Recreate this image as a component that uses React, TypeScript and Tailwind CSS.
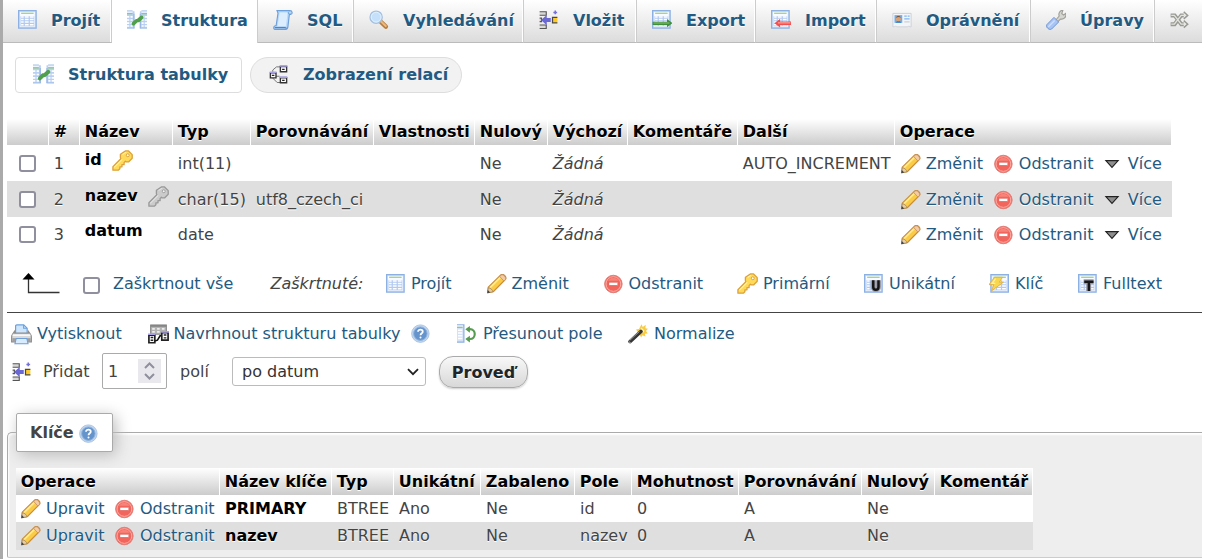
import React from "react";

type IconProps = { className?: string };

function Svg({ className = "size-5", children }: IconProps & { children: React.ReactNode }) {
  return (
    <svg viewBox="0 0 16 16" className={`shrink-0 ${className}`} fill="none">
      {children}
    </svg>
  );
}

function Sheet() {
  return (
    <>
      <rect x="0.5" y="0.5" width="14" height="14" fill="#cfe0f6" stroke="#8db0e2" />
      <rect x="1.6" y="1.6" width="11.8" height="11.8" fill="#f8fbff" />
      <path d="M2.5 2.6h10" stroke="#8fca7c" strokeWidth="0.9" />
      <path d="M2 5h11v8H2z" fill="#b3caf0" />
      <path d="M2.5 5.6h2M5.5 5.6h3M9.5 5.6h3M2.5 7.6h2M5.5 7.6h3M9.5 7.6h3M2.5 9.6h2M5.5 9.6h3M9.5 9.6h3M2.5 11.8h2M5.5 11.8h3M9.5 11.8h3" stroke="#fff" strokeWidth="1.1" />
    </>
  );
}

const Browse = (p: IconProps) => (
  <Svg {...p}><Sheet /></Svg>
);

const Structure = (p: IconProps) => (
  <Svg {...p}>
    <path d="M0 1h6v13.5H0zM10.3 1H16v13.5h-5.7z" fill="#b9d0f3" />
    <path d="M0 .7h4.5M16 .7h-4.5M0 14.5h6M16 14.5h-5.7" stroke="#a3bfe8" strokeWidth="0.8" />
    <path d="M5.5 3v11.5M10.7 3v11.5" stroke="#9ab8e6" strokeWidth="1" />
    <path d="M0 1.7h4.5M11.5 1.7H16" stroke="#fff" strokeWidth="0.8" />
    <path d="M0 2.9h4.4M11.6 2.9H16" stroke="#8fca7c" strokeWidth="1" />
    <path d="M0 5.5h1.8M2.8 5.5h1.7M0 8h1.8M2.8 8h1.7M0 10.5h1.8M2.8 10.5h1.7M0 12.8h1.8M2.8 12.8h1.7M11.7 5.5h1.6M14.2 5.5H16M11.7 8h1.6M14.2 8H16M11.7 10.5h1.6M14.2 10.5H16M11.7 12.8h1.6M14.2 12.8H16" stroke="#fff" strokeWidth="1.3" />
    <path d="M5.2 10.9 7.6 8.6l1.4-.2L11.7 5.9" stroke="#4f9f4b" strokeWidth="3" strokeLinecap="round" strokeLinejoin="round" />
  </Svg>
);

const Sql = (p: IconProps) => (
  <Svg {...p}>
    <path d="M3.2.5h10.3c2.4 0 2.2 3 .6 3h-1l-1.2 10c-.2 1.4-.8 2-1.8 2H1.6C.2 15.5.2 13 1.8 12.6h.7L4 2.5z" fill="#b9d9fa" stroke="#6d9fd9" strokeWidth="0.9" />
    <path d="M5.4 2h6.3l-1.4 10.8H3.7z" fill="#dceefe" />
    <path d="M1.4 14h8.2c.8 0 1 .3 1 .8" stroke="#4f83c5" strokeWidth="1" />
    <path d="M12.8 1.3c-.8.4-.7 1.7.1 2.1h1.4" stroke="#6d9fd9" strokeWidth="0.8" />
  </Svg>
);

const Search = (p: IconProps) => (
  <Svg {...p}>
    <path d="m9.5 9.5 4 3.8" stroke="#b47b43" strokeWidth="3.5" strokeLinecap="round" />
    <path d="m9.7 9.2 3.7 3.6" stroke="#edb877" strokeWidth="1.7" strokeLinecap="round" />
    <circle cx="5.7" cy="5.7" r="4.9" fill="#c5e0fa" stroke="#a5bfdf" strokeWidth="1" />
    <circle cx="5.7" cy="5.7" r="3.9" stroke="#e4f2ff" strokeWidth="0.7" />
  </Svg>
);

const Insert = (p: IconProps) => (
  <Svg {...p}>
    <path d="M.5 1.4h5.3v2.8H.5M.5 6.5H2v2.8H.5M.5 12h5.3v2.8H.5" fill="#d8d8d8" stroke="#555" strokeWidth="0.9" />
    <path d="M1.6 8 6.2 3.9v2.5h3.2v3.2H6.2v2.5z" fill="#6a68d2" />
    <path d="M14.7 5.9h-3.9v4.3h3.9" fill="#ffc928" stroke="#4b4a42" strokeWidth="1" />
    <path d="M13 .4v3M11.5 1.9h3" stroke="#7471df" strokeWidth="1.2" />
  </Svg>
);

const Export = (p: IconProps) => (
  <Svg {...p}>
    <Sheet />
    <path d="M.5 9.3H12V7.2l4.4 3.3-4.4 3.3v-1.9H.5z" fill="#3f8e3b" />
    <path d="M1.2 10.4H14" stroke="#8cc276" strokeWidth="0.8" />
  </Svg>
);

const Import = (p: IconProps) => (
  <Svg {...p}>
    <Sheet />
    <path d="M16.3 9.2H7.3V7L2.8 10.5l4.5 3.4V12h9z" fill="#f05050" />
    <path d="M15.5 10.3H5.5" stroke="#ffb0a7" strokeWidth="0.8" />
  </Svg>
);

const Rights = (p: IconProps) => (
  <Svg {...p}>
    <path d="M.7 2.7h14.6v10.8h-1.1l-.8-.8-.8.8H3.6l-.8-.8-.8.8H.7z" fill="#f3f5f8" stroke="#ccd1d7" strokeWidth="0.8" />
    <path d="M2 4.1h6.2v6.2H2z" fill="#6eaced" />
    <path d="M3 10.2c.3-2 4-2 4.3 0z" fill="#357fc8" />
    <circle cx="5.1" cy="6.9" r="2" fill="#dfa16c" />
    <path d="M3.2 6.2c.2-2 3.6-2 3.8 0-1.2-1-2.3-.7-3.8 0z" fill="#80522e" />
    <path d="M9.8 4.8h2M12.5 4.8h1.6M9.8 7h4.3" stroke="#82b6ef" strokeWidth="1" />
    <path d="M9.8 9.5h4.3" stroke="#cbd0d5" />
  </Svg>
);

const Wrench = (p: IconProps) => (
  <Svg {...p}>
    <path d="m8 7.8 2.6-3c-.9-2 .4-4.4 3-4.8l-1 2.8 1.5 1.2L16 2.6c.3 3.2-1.8 5.2-4.4 4.6L8.9 9.9" fill="#d6d6d1" stroke="#a09e99" strokeWidth="0.9" />
    <path d="M6.4 5.9 10.1 9.6 4.5 15.2c-1.6 1.2-4.8-1-3.9-3.4z" fill="#a7c4f5" stroke="#6f94d7" strokeWidth="0.8" />
    <path d="m6.9 8.4-5 5" stroke="#cfe1ff" strokeWidth="1" />
  </Svg>
);

const Shuffle = (p: IconProps) => (
  <Svg {...p}>
    <path d="M.5 4.3h3.2l5.3 7H12M.5 11.3h3.2l5.3-7H12" stroke="#999993" strokeWidth="3.2" />
    <path d="M11 1.5 14.2 4.3l-3.2 2.8M11 8.5l3.2 2.8-3.2 2.8" stroke="#999993" strokeWidth="1.1" fill="#eeeeec" />
    <path d="M1 4.3h2.5l5.4 7h3.6M1 11.3h2.5l5.4-7h3.6" stroke="#e2e2de" strokeWidth="1.1" />
  </Svg>
);

const Relations = (p: IconProps) => (
  <Svg {...p}>
    <path d="M3 5.5V4l3-2.5h3M5 9h3.5M3 10.5 6.5 14H9" stroke="#777" strokeWidth="0.8" />
    <path d="M1.1 6.3h4.5v4H1.1zM9.1 1.2h5v4.2h-5zM9.1 10.2h5v4h-5z" fill="#fff" stroke="#333" strokeWidth="1.1" />
    <path d="M.6 5.8H6M8.6.8h6M8.6 9.7h6" stroke="#a7a0df" strokeWidth="1.3" />
    <path d="M2.3 8.3h2M10.5 3.5h2M10.5 12.3h2" stroke="#222" strokeWidth="1" />
  </Svg>
);

const KeyIcon = ({ className, grey }: IconProps & { grey?: boolean }) => (
  <Svg className={className}>
    <path
      d="M10.4.7h2.2l2.8 2.8v2.8L12.6 9.1h-1.8l-.6-.5-1 1v1.6H7.6v1.6H6v1.5l-1.2 1.1H.7v-2.7l6-6-.3-.9V3.2z"
      fill={grey ? "#cbcbcb" : "#ffda58"}
      stroke={grey ? "#999999" : "#dda13c"}
      strokeWidth="1"
      strokeLinejoin="round"
    />
    <path d="m1.7 13.2 6.1-6.1M8 3.4 10.8 1.6" stroke={grey ? "#e2e2e2" : "#fff3ab"} strokeWidth="0.8" />
    <circle cx="12" cy="4" r="1.1" fill={grey ? "#f5f5f5" : "#fffdf2"} stroke={grey ? "#999" : "#d79c3c"} strokeWidth="0.7" />
  </Svg>
);

const Pencil = (p: IconProps) => (
  <Svg {...p}>
    <path d="M.5 14.9 1 10.5 10.8.9c1-.9 2.4-.6 3.3.3s1.5 2.2.6 3.2L5 14.2z" fill="#fbcb45" stroke="#c68e40" strokeWidth="0.9" strokeLinejoin="round" />
    <path d="m2.6 10.8 7.9-7.8" stroke="#ffec96" strokeWidth="1.4" />
    <path d="M10.1 1.9 11.5.8c1.4-.9 4.2 2 3.2 3.6l-1.2 1.2z" fill="#f3cba5" stroke="#c28e65" strokeWidth="0.6" />
    <path d="M1 11.1.5 15l4.2-.7c-.2-1.7-1.9-3.2-3.7-3.2z" fill="#e6cfa6" stroke="#a18254" strokeWidth="0.6" />
    <path d="m.2 15.4.4-2.6 2 2z" fill="#444" />
  </Svg>
);

const Minus = (p: IconProps) => (
  <Svg {...p}>
    <circle cx="7.5" cy="8" r="7" fill="#f2655c" stroke="#df8079" strokeWidth="0.8" />
    <circle cx="7.5" cy="8" r="5.9" stroke="#ffaca4" strokeWidth="0.8" />
    <path d="M3.2 5.4c2-3.2 6.7-3.2 8.6 0z" fill="#f99188" opacity=".7" />
    <rect x="4" y="6.7" width="7" height="2.3" fill="#fff" stroke="#c95c55" strokeWidth="0.3" />
  </Svg>
);

const More = ({ className = "size-5" }: IconProps) => (
  <Svg className={className}>
    <path d="M3.1 5.3h9.8L8 10.7z" fill="#8f8f8f" stroke="#222" strokeWidth="0.9" />
  </Svg>
);

const Badge = ({ unique }: { unique?: boolean }) => (
  <Svg>
    <Sheet />
    {unique ? (
      <path d="M7.4 5v5.2c0 3 4.2 3 4.2 0V5" stroke="#9a9caa" strokeWidth="4" />
    ) : (
      <path d="M4.5 6.2h8M8.5 6v7.5" stroke="#9a9caa" strokeWidth="4" />
    )}
    {unique ? (
      <path d="M7.4 5v5.4c0 3 4.2 3 4.2 0V5" stroke="#161616" strokeWidth="2" />
    ) : (
      <path d="M5 6.2h7.4M8.7 6v7.5" stroke="#161616" strokeWidth="2" />
    )}
  </Svg>
);

const IndexIcon = () => (
  <Svg>
    <g transform="translate(1 0)"><Sheet /></g>
    <path d="M4.4 2.6h6.4L8.3 6.5h3.3L2 13.5l1.8-5H0z" fill="#f8d64e" stroke="#dfae45" strokeWidth="0.7" />
    <path d="m5.3 3.7-2.8 3.8H5" stroke="#fff2a5" />
  </Svg>
);

const Printer = () => (
  <Svg className="-my-1 size-[21px]">
    <path d="M3.5 7V1.6c0-.7.4-1 1-1h5.2l2.6 2.6V7" fill="#cde5fd" stroke="#6ca1dc" strokeWidth="0.9" />
    <path d="M9.6.8v2.5h2.6" stroke="#6ca1dc" strokeWidth="0.8" />
    <path d="M2.8 5.5 1 8c-.4.5-.5 1-.5 2v3.6h15V10c0-1-.1-1.5-.5-2l-1.8-2.5V7H2.8z" fill="#d9d9d9" stroke="#8c8c8c" strokeWidth="0.9" />
    <path d="M1.2 8.5h13.6" stroke="#fff" strokeWidth="1" />
    <path d="M1 10.8h14v2.4H1z" fill="#a0a0a0" />
    <path d="M4 11h8l1 4H3z" fill="#d9ebff" stroke="#6f9fd8" strokeWidth="0.8" />
  </Svg>
);

const Designer = () => (
  <Svg className="-my-1 size-[21px]">
    <path d="M2 .8h12v7H2z" fill="#b4b4b4" stroke="#888" strokeWidth="0.8" />
    <path d="M2 1.4h12" stroke="#858585" strokeWidth="1.5" />
    <path d="M3.2 3.7h2M6.9 3.7h2M10.6 3.7h2M3.2 6h2M6.9 6h2M10.6 6h2" stroke="#ededed" strokeWidth="1.2" />
    <path d="m5 13 2.2-.7L9.2 9H11" stroke="#111" strokeWidth="1.2" />
    <path d="M.7 8.5h4.5v5.8H.7zM10.5 6.5h4.8v5.8h-4.8z" fill="#fff" stroke="#222" strokeWidth="1.3" />
    <path d="M0 7.8h5.7M10 6h6" stroke="#aaa2e6" strokeWidth="1.2" />
    <path d="M2 10.3h2M2 12.4h2M12 8.4h2M12 10.5h2" stroke="#222" strokeWidth="1" />
  </Svg>
);

const Help = (p: IconProps) => (
  <Svg {...p}>
    <circle cx="7.5" cy="7.7" r="7" fill="#c0d5ee" stroke="#a3c0e2" strokeWidth="0.7" />
    <circle cx="7.5" cy="7.7" r="5.4" fill="#6594cd" stroke="#8fb2dc" strokeWidth="0.8" />
    <path d="M5.6 6.2c0-2.3 3.8-2.1 3.8-.1 0 1.4-1.8 1.2-1.8 2.9" stroke="#fff" strokeWidth="1.4" />
    <circle cx="7.6" cy="10.7" r=".8" fill="#fff" />
  </Svg>
);

const Move = () => (
  <Svg>
    <path d="M0 .8h5.4v13.7H0z" fill="#d4e2f8" />
    <path d="M0 .7h5.5v13.8H0" stroke="#8eafe2" strokeWidth="1" />
    <path d="M0 1.6h4.8" stroke="#fff" strokeWidth="0.8" />
    <path d="M0 2.7h4.5" stroke="#8fca7c" />
    <path d="M.8 5h3.4M.8 7.2h3.4M.8 9.4h3.4M.8 11.6h3.4" stroke="#fff" strokeWidth="1.2" />
    <path d="M9 4.1h1.3c5.2 0 5.2 7.9 0 7.9H9" stroke="#559b50" strokeWidth="1.7" />
    <path d="M6.6 4.2 10.3 1.5v5.4zM6.6 12l3.7-2.7v5.4z" fill="#559b50" />
  </Svg>
);

const Wand = () => (
  <Svg>
    <path d="m10.8.2 1 2.2 2.4-1.8-.3 2.8 2 .3-1.5 1.8 1.4 2-2.3.2.5 2.2-2.5-.9-1 1.7-1.2-2.4-2.6.2 1.2-2-1.5-2.2 2.4-.3z" fill="#f8cb42" />
    <path d="m10.7 2.8 2.5 2.5-1.2 1.9-2.5-2z" fill="#fff7bd" />
    <path d="m1.7 14 8.6-8" stroke="#353535" strokeWidth="3" strokeLinecap="round" />
    <path d="m1.4 13.1 7.8-7.2" stroke="#a1a1a1" strokeWidth="0.8" />
    <path d="m.8 14.3 1.3.5" stroke="#bbb" strokeWidth="0.8" />
  </Svg>
);

function Check({ className = "" }: IconProps) {
  return <input type="checkbox" className={`block size-[17px] shrink-0 appearance-none rounded-[3px] border-2 border-[#8f8f9d] bg-white ${className}`} />;
}

const tabs = [
  { label: "Projít", Icon: Browse, width: "w-[109px]", gap: "gap-[13px]" },
  { label: "Struktura", Icon: Structure, width: "w-[146px]", gap: "gap-[14px]", active: true },
  { label: "SQL", Icon: Sql, width: "w-[96px]", gap: "gap-[14px]" },
  { label: "Vyhledávání", Icon: Search, width: "w-[170px]", gap: "gap-[14px]" },
  { label: "Vložit", Icon: Insert, width: "w-[113px]", gap: "gap-[14px]" },
  { label: "Export", Icon: Export, width: "w-[119px]", gap: "gap-[14px]" },
  { label: "Import", Icon: Import, width: "w-[121px]", gap: "gap-[14px]" },
  { label: "Oprávnění", Icon: Rights, width: "w-[154px]", gap: "gap-[14px]" },
  { label: "Úpravy", Icon: Wrench, width: "w-[124px]", gap: "gap-[14px]" },
  { label: "", Icon: Shuffle, width: "w-[60px]", gap: "gap-[14px]" },
];

const columns = ["", "#", "Název", "Typ", "Porovnávání", "Vlastnosti", "Nulový", "Výchozí", "Komentáře", "Další", "Operace"];
const columnWidths = [42, 31, 93, 78, 123, 101, 73, 80, 110, 157, 277];
const fields = [
  { name: "id", type: "int(11)", collation: "", extra: "AUTO_INCREMENT", key: "primary" },
  { name: "nazev", type: "char(15)", collation: "utf8_czech_ci", extra: "", key: "index" },
  { name: "datum", type: "date", collation: "", extra: "", key: "" },
];
const rowStyles = ["h-9 *:pt-[2px]", "h-9 bg-[#dfdfdf] *:pt-[2px]", "h-[35px] *:pt-0"];

const indexColumns = ["Operace", "Název klíče", "Typ", "Unikátní", "Zabaleno", "Pole", "Mohutnost", "Porovnávání", "Nulový", "Komentář"];
const indexWidths = [204, 112, 62, 87, 94, 57, 107, 123, 73, 98];
const indexes = [
  ["PRIMARY", "BTREE", "Ano", "Ne", "id", "0", "A", "Ne", ""],
  ["nazev", "BTREE", "Ano", "Ne", "nazev", "0", "A", "Ne", ""],
];

function Link({ icon, children, gap = "gap-[5px]" }: { icon: React.ReactNode; children: React.ReactNode; gap?: string }) {
  return (
    <a className={`flex items-center whitespace-nowrap text-[#235a81] ${gap}`}>
      {icon}
      <span>{children}</span>
    </a>
  );
}

function HeadRow({ labels, height }: { labels: string[]; height: string }) {
  return (
    <tr className={height}>
      {labels.map((label, i) => (
        <th key={i} className="border-r border-white bg-linear-to-b from-white to-[#cccccc] bg-clip-padding p-0 pl-[4.8px] text-left font-bold whitespace-nowrap text-black">
          {label}
        </th>
      ))}
    </tr>
  );
}

function Columns({ widths }: { widths: number[] }) {
  return (
    <colgroup>
      {widths.map((width, i) => <col key={i} style={{ width }} />)}
    </colgroup>
  );
}

export default function App() {
  return (
    <div className="h-[560px] w-[1206px] overflow-hidden bg-white font-['DejaVu_Sans',sans-serif] text-base leading-5 text-[#444444]">
      <div className="h-[559px] w-[1202px] overflow-hidden border-l-3 border-[#aaaaaa]">
        <nav className="flex h-[43px] overflow-hidden text-[#235a81]">
          {tabs.map(({ label, Icon, width, gap, active }, i) => (
            <a
              key={i}
              className={`flex shrink-0 items-center border-r border-r-[#cccccc] pl-[15px] font-bold [text-shadow:0_1px_0_#fff] ${gap} ${width} ${
                active ? "bg-white pb-[3px]" : "border-b border-b-[#bbbbbb] bg-linear-to-b from-white to-[#dcdcdc] pb-[2px] shadow-[inset_-1px_0_0_#fff]"
              }`}
            >
              <Icon />
              <span className="mt-[2px]">{label}</span>
            </a>
          ))}
        </nav>

        <div className="mt-[14px] ml-3 flex gap-2 font-bold text-[#235a81]">
          <a className="flex h-9 w-[227px] items-center gap-[14px] rounded border border-[#dddddd] pb-px pl-[17px]">
            <Structure className="size-[21px]" />
            <span>Struktura tabulky</span>
          </a>
          <a className="flex h-9 w-[212px] items-center gap-[14px] rounded-full border border-[#dddddd] bg-[#f2f2f2] pb-px pl-[18px]">
            <Relations />
            <span>Zobrazení relací</span>
          </a>
        </div>

        <table className="mt-[26px] ml-1 w-[1165px] table-fixed border-separate border-spacing-0 [text-shadow:0_1px_0_#fff]">
          <Columns widths={columnWidths} />
          <thead>
            <HeadRow labels={columns} height="h-[26px]" />
          </thead>
          <tbody>
            {fields.map((f, i) => (
              <tr key={f.name} className={`*:pr-0 *:pb-0 *:pl-[4.8px] ${rowStyles[i]}`}>
                <td><Check className={i < 2 ? "mb-px ml-[7px]" : "ml-[7px]"} /></td>
                <td>{i + 1}</td>
                <td>
                  <div className="flex items-center pb-[8px] font-bold text-black">
                    <span>{f.name}</span>
                    {f.key && <KeyIcon grey={f.key === "index"} className="ml-[10px] size-[21px]" />}
                  </div>
                </td>
                <td>{f.type}</td>
                <td>{f.collation}</td>
                <td />
                <td>Ne</td>
                <td className="italic">Žádná</td>
                <td />
                <td>{f.extra}</td>
                <td>
                  <div className="ml-px grid grid-cols-[93px_108px_70px]">
                    <Link icon={<Pencil />}>Změnit</Link>
                    <Link icon={<Minus />}>Odstranit</Link>
                    <Link icon={<More />} gap="gap-[6px]">Více</Link>
                  </div>
                </td>
              </tr>
            ))}
          </tbody>
        </table>

        <div className="mt-[18px] grid h-[27px] grid-cols-[80px_30px_157px_116px_101px_117px_133px_127px_125px_89px_100px] items-center">
          <svg viewBox="0 0 38 22" className="ml-[19px] h-[22px] w-[38px]" fill="none">
            <path d="M6.5 5v14.5h31" stroke="#333" strokeWidth="1.3" />
            <path d="M6.5 0 12.5 6.5H.5z" fill="#000" />
          </svg>
          <Check className="mt-[3px]" />
          <span className="text-[#235a81]">Zaškrtnout vše</span>
          <span className="pl-[0.5px] italic">Zaškrtnuté:</span>
          <Link icon={<Browse />}>Projít</Link>
          <Link icon={<Pencil />} gap="gap-[4.5px]">Změnit</Link>
          <Link icon={<Minus />} gap="gap-[4.5px]">Odstranit</Link>
          <Link icon={<KeyIcon className="size-[21px]" />}>Primární</Link>
          <Link icon={<Badge unique />}>Unikátní</Link>
          <Link icon={<IndexIcon />} gap="gap-[6px]">Klíč</Link>
          <Link icon={<Badge />}>Fulltext</Link>
        </div>

        <hr className="mt-[15px] ml-1 border-0 border-t border-[#444444]" />

        <div className="mt-[11px] ml-2 grid h-5 grid-cols-[137px_263px_46px_171px_120px] items-center">
          <Link icon={<Printer />}>Vytisknout</Link>
          <Link icon={<Designer />} gap="gap-[4.5px]">Navrhnout strukturu tabulky</Link>
          <Help />
          <Link icon={<Move />} gap="gap-[6px]">Přesunout pole</Link>
          <Link icon={<Wand />} gap="gap-[6px]">Normalize</Link>
        </div>

        <div className="mt-[9px] flex h-[38px] items-center">
          <span className="ml-[9px]"><Insert /></span>
          <span className="ml-[11px] w-[59px]">Přidat</span>
          <div className="mb-[2px] flex h-9 w-[65px] items-center justify-between rounded-[2px] border border-[#aaaaaa] pr-[5px] pl-[5px]">
            <span className="pt-[2px]">1</span>
            <span className="flex h-6 w-[23px] flex-col items-center justify-center bg-[#e9e9ed]">
              <svg viewBox="0 0 23 24" className="h-6 w-[23px]" fill="none" stroke="#8f8f9d" strokeWidth="2">
                <path d="m7 9 4.5-4.5L16 9M7 15l4.5 4.5L16 15" />
              </svg>
            </span>
          </div>
          <span className="ml-[13px] w-[52px]">polí</span>
          <div className="mb-px flex h-[29px] w-[194px] items-center justify-between rounded-[3px] border border-[#bbbbbb] pr-[6px] pl-[9px] text-[#333333]">
            <span className="pt-px">po datum</span>
            <svg viewBox="0 0 12 8" className="h-2 w-3" fill="none" stroke="#222" strokeWidth="1.8">
              <path d="m1 1.2 5 5 5-5" />
            </svg>
          </div>
          <button className="ml-[13px] h-8 w-[89px] rounded-[14px] border border-[#aaaaaa] bg-linear-to-b from-[#f8f8f8] to-[#d8d8d8] pt-px font-bold text-[#212529] shadow-[0_1px_2px_#ccc] [text-shadow:0_1px_0_#fff]">
            Proveď
          </button>
        </div>

        <section className="mt-[41px] ml-1 h-[126px] rounded-tl-[5px] rounded-bl-[2px] border border-r-0 border-[#aaaaaa] border-b-[#cccccc] bg-[#eeeeee] pl-2 shadow-[inset_1px_2px_2px_#fff]">
          <h2 className="-mt-5 flex h-[39px] w-[97px] items-center gap-[5px] rounded-[2px] border border-[#aaaaaa] bg-white pl-[13px] font-bold shadow-[3px_3px_15px_#bbb]">
            <span>Klíče</span>
            <Help className="size-5 translate-y-px" />
          </h2>
          <table className="mt-4 w-[1017px] table-fixed border-separate border-spacing-0 [text-shadow:0_1px_0_#fff]">
            <Columns widths={indexWidths} />
            <thead>
              <HeadRow labels={indexColumns} height="h-[27px]" />
            </thead>
            <tbody>
              {indexes.map((row, i) => (
                <tr key={row[0]} className={`*:p-0 *:pl-[5px] ${i === 0 ? "h-[27px] bg-white" : "h-7 bg-[#dfdfdf]"}`}>
                  <td>
                    <div className="grid grid-cols-[94px_105px]">
                      <Link icon={<Pencil />}>Upravit</Link>
                      <Link icon={<Minus />}>Odstranit</Link>
                    </div>
                  </td>
                  {row.map((cell, j) => (
                    <td key={j} className={j === 0 ? "font-bold text-black" : ""}>{cell}</td>
                  ))}
                </tr>
              ))}
            </tbody>
          </table>
        </section>
      </div>
    </div>
  );
}
